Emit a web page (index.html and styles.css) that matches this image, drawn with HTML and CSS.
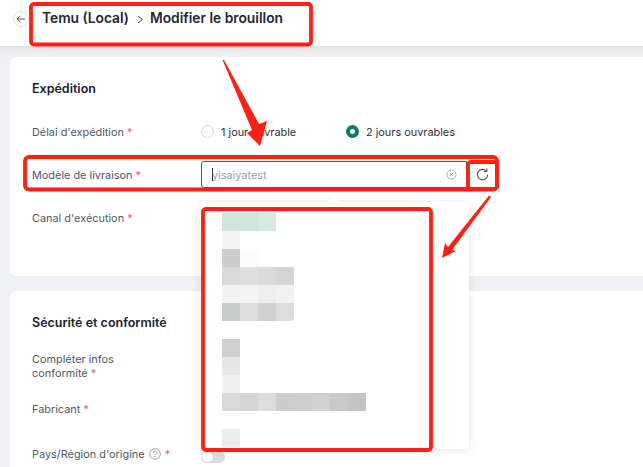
FILE: index.html
```html
<!DOCTYPE html>
<html lang="fr">
<head>
<meta charset="utf-8">
<title>Modifier le brouillon</title>
<link rel="stylesheet" href="styles.css">
</head>
<body>
<header class="topbar">
  <span class="back">
    <svg width="10" height="10" viewBox="0 0 10 10"><path d="M9 5H1.300M4.400 1.800 1.200 5l3.200 3.200" fill="none" stroke="#4a5260" stroke-width="1"/></svg>
  </span>
  <span class="crumb">Temu (Local)</span>
  <svg class="crumb-sep" width="7" height="9" viewBox="0 0 7 9"><path d="M1 1l4.400 3.500L1 8" fill="none" stroke="#3a4250" stroke-width="1"/></svg>
  <span class="crumb">Modifier le brouillon</span>
</header>
<div class="shade"></div>
<main class="page">
  <section class="card card-ship">
    <h2 class="card-title">Expédition</h2>
    <div class="row">
      <div class="label">Délai d'expédition <span class="req">*</span></div>
      <div class="radios">
        <span class="radio-item radio-first"><i class="radio"></i>1 jour ouvrable</span>
        <span class="radio-item"><i class="radio radio-on"></i>2 jours ouvrables</span>
      </div>
    </div>
    <div class="row">
      <div class="label">Modèle de livraison <span class="req">*</span></div>
      <div class="control">
        <div class="input"><span class="caret"></span><span class="placeholder">yisaiyatest</span>
          <svg class="clear" width="11" height="11" viewBox="0 0 11 11"><circle cx="5.500" cy="5.500" r="4.500" fill="none" stroke="#a9afb8"/><path d="M3.800 3.800l3.400 3.400M7.200 3.800 3.800 7.200" stroke="#a9afb8"/></svg>
        </div>
        <div class="refresh">
          <svg width="13" height="13" viewBox="0 0 13 13"><path d="M11.700 6.500A5.200 5.200 0 1 1 10.100 2.800" fill="none" stroke="#4a5260" stroke-width="1.100"/><path d="M10.800 .6v2.900H8" fill="none" stroke="#4a5260" stroke-width="1.100"/></svg>
        </div>
      </div>
    </div>
    <div class="row">
      <div class="label">Canal d'exécution <span class="req">*</span></div>
    </div>
  </section>
  <section class="card card-safe">
    <h2 class="card-title">Sécurité et conformité</h2>
    <div class="row row-tall">
      <div class="label">Compléter infos<br>conformité <span class="req">*</span></div>
    </div>
    <div class="row row-maker">
      <div class="label">Fabricant <span class="req">*</span></div>
    </div>
    <div class="row row-origin">
      <div class="label label-origin">Pays/Région d'origine
        <svg class="help" width="12" height="12" viewBox="0 0 12 12"><circle cx="6" cy="6" r="5.300" fill="none" stroke="#8a919c" stroke-width=".8"/><path d="M4.400 4.700c0-2.100 3.300-2.100 3.300-.1 0 1.300-1.700 1.300-1.700 2.600" fill="none" stroke="#8a919c" stroke-width=".8"/><path d="M5.500 8.100h1v1h-1z" fill="#8a919c"/></svg>
        <span class="req">*</span></div>
      <span class="toggle"><i class="knob"></i></span>
    </div>
  </section>
</main>

<div class="dropdown">
  <svg class="mosaic" width="162" height="234" viewBox="-18 0 162 234">
    <path d="M-18 0H0v18h-18z" fill="#fbfcfc"/>
    <path d="M0 0h54v18H0z" fill="#d0e4de"/><path d="M36 0h18v18H36z" fill="#d8e9e4"/>
    <path d="M0 18h18v18H0z" fill="#f3f3f3"/>
    <path d="M0 36h18v18H0z" fill="#cdcdce"/><path d="M18 36h18v18H18z" fill="#fbfbfb"/>
    <path d="M0 54h18v18H0z" fill="#d9d9da"/><path d="M18 54h18v18H18z" fill="#dedede"/><path d="M36 54h18v18H36z" fill="#d9dadb"/><path d="M54 54h18v18H54z" fill="#d5d5d6"/>
    <path d="M0 72h18v18H0z" fill="#f2f2f2"/><path d="M18 72h18v18H18z" fill="#f3f4f3"/><path d="M36 72h18v18H36z" fill="#eeeeee"/><path d="M54 72h18v18H54z" fill="#f2f2f2"/>
    <path d="M0 90h18v18H0z" fill="#cbcccc"/><path d="M18 90h18v18H18z" fill="#dcdcdc"/><path d="M36 90h18v18H36z" fill="#cfcfd0"/><path d="M54 90h18v14a4 4 0 0 1-4 4H54z" fill="#dcdcdd"/>
    <path d="M0 126h18v18H0z" fill="#cfcfd0"/>
    <path d="M0 144h18v18H0z" fill="#e7e7e8"/>
    <path d="M0 162h18v18H0z" fill="#f0f0f0"/>
    <path d="M0 180h18v18H0z" fill="#d9d9da"/><path d="M18 180h18v18H18z" fill="#d5d5d6"/><path d="M36 180h18v18H36z" fill="#dcdcdd"/><path d="M54 180h18v18H54z" fill="#cdcdce"/><path d="M72 180h18v18H72z" fill="#cecece"/><path d="M90 180h18v18H90z" fill="#d1d1d2"/><path d="M108 180h18v18h-18z" fill="#c9c9ca"/><path d="M126 180h18v18h-18z" fill="#c5c5c6"/>
    <path d="M0 216h18v18H0z" fill="#ececec"/>
  </svg>
</div>

<svg class="marks" width="643" height="467" viewBox="0 0 643 467">
  <g fill="none" stroke="#fe2015" stroke-width="3.800">
    <rect x="31" y="4" width="280" height="40.500" rx="3"/>
    <rect x="25" y="157" width="472" height="32.500" rx="4"/>
    <rect x="468" y="162" width="29" height="27" rx="3"/>
    <rect x="203" y="209" width="228" height="241" rx="3"/>
  </g>
  <path d="M222.500 60 L224 60 L259 124 L267 121 L260 146 L247 133 L252 130Z" fill="#fe2015"/>
  <path d="M489 195.500 L491 197 L452 250 L456 251 L442 258 L445 243 L448 247Z" fill="#fe2015"/>
</svg>
</body>
</html>
```
FILE: styles.css
```css
* { box-sizing: border-box; }
body {
  margin: 0;
  height: 467px;
  overflow: hidden;
  position: relative;
  background: #f0f1f5;
  font-family: Inter, "Liberation Sans", sans-serif;
  font-size: 10.900px;
  color: #1f2633;
}
.topbar {
  height: 46px;
  background: #fff;
  display: flex;
  align-items: flex-start;
  padding: 10px 0 0 13px;
}
.back {
  width: 16px;
  height: 16px;
  margin-top: 1px;
  border: 1px solid #e1e4ea;
  border-radius: 50%;
  display: flex;
  align-items: center;
  justify-content: center;
  margin-right: 13px;
  flex: none;
}
.crumb {
  font-size: 13.800px;
  line-height: 17px;
  font-weight: 600;
  color: #232833;
}
.crumb-sep { margin: 5px 6px 0 8px; }
.shade {
  height: 11px;
  background: linear-gradient(#e2e4e9, #f0f1f5);
}
.page { padding-left: 10px; }
.card {
  background: #fff;
  border-radius: 6px 0 0 6px;
  padding: 24px 22px 0;
}
.card-ship { height: 219px; margin-bottom: 15px; }
.card-safe { height: 176px; border-radius: 6px 0 0 0; }
.card-title {
  margin: 0;
  font-size: 12.500px;
  line-height: 15px;
  font-weight: 600;
  color: #1c2230;
}
.row {
  height: 43px;
  display: flex;
  align-items: center;
}
.card-ship .card-title { margin-bottom: 14px; }
.label {
  width: 169px;
  flex: none;
  color: #4f5968;
  line-height: 14px;
}
.label-origin { white-space: nowrap; }
.req { color: #f25c6a; }
.radios { display: flex; align-items: center; }
.radio-item { display: flex; align-items: center; color: #2a3140; }
.radio-first { width: 145px; }
.radio {
  width: 13px;
  height: 13px;
  margin-right: 7px;
  border: 1px solid #d5d8de;
  border-radius: 50%;
  background: #fff;
}
.radio-on { border: 4px solid #0b7a64; }
.control { display: flex; align-items: center; }
.input {
  width: 266px;
  height: 27px;
  border: 1px solid #0b7a64;
  border-radius: 3px 0 0 3px;
  display: flex;
  align-items: center;
  padding: 0 9px 0 10px;
}
.caret { width: 1px; height: 13px; background: #2a3140; margin-right: -1px; }
.placeholder { color: #9aa1ac; flex: 1; }
.refresh {
  width: 31px;
  height: 27px;
  display: flex;
  align-items: center;
  justify-content: center;
}
.card-safe .card-title { margin-bottom: 16px; }
.row-tall { height: 40px; }
.row-maker { height: 46px; }
.row-origin { height: 42px; padding-top: 2px; align-items: flex-start; }
.row-origin .label { margin-top: 13px; }
.help { vertical-align: -2px; margin: 0 1px; }
.toggle {
  width: 24px;
  height: 12px;
  border-radius: 6px;
  background: #d9dce3;
  padding: 1px;
  margin-top: 17px;
  flex: none;
}
.knob { display: block; width: 11px; height: 10px; border-radius: 50%; background: #fff; }
.dropdown {
  position: absolute;
  left: 201px;
  top: 202px;
  width: 268px;
  height: 247px;
  background: #fff;
  border-radius: 3px;
  box-shadow: 0 1px 10px rgba(30, 40, 60, .12);
}
.dropdown::before {
  content: "";
  position: absolute;
  left: 129px;
  top: -4px;
  width: 8px;
  height: 8px;
  background: #fff;
  transform: rotate(45deg);
}
.mosaic { position: absolute; left: 3px; top: 11px; }
.marks { position: absolute; left: 0; top: 0; }
```
